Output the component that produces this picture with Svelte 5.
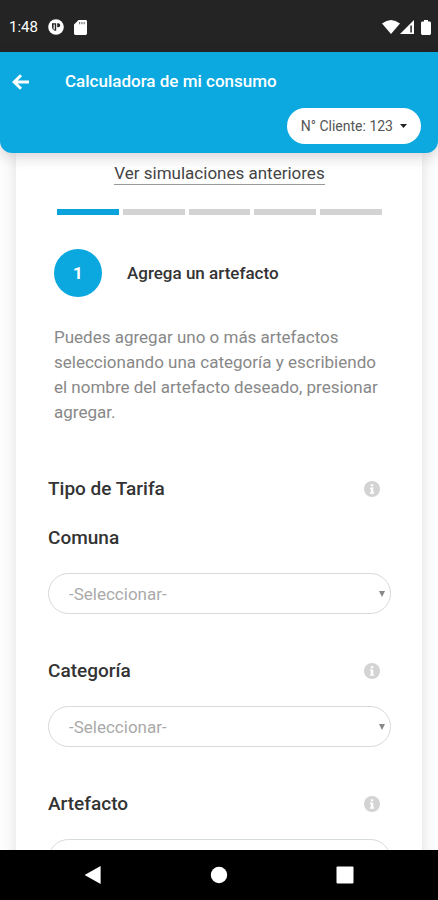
<script>
  let steps = [1, 2, 3, 4, 5]
  let currentStep = 1

  let fields = [
    { id: 'comuna', label: 'Comuna', info: false, value: '' },
    { id: 'categoria', label: 'Categoría', info: true, value: '' },
    { id: 'artefacto', label: 'Artefacto', info: true, value: '' }
  ]
</script>

{#snippet infoButton(label)}
  <button class="info" type="button" aria-label="Información: {label}">
    <svg viewBox="0 0 16 16" width="16" height="16">
      <circle cx="8" cy="8" r="8" fill="#d3d3d3" />
      <path d="M6.8 3.2h2.5v2.1H6.8zM6 6.6h3.3v4.6h.9v1.5H5.9v-1.5h.9V8.1H6z" fill="#fff" />
    </svg>
  </button>
{/snippet}

<div class="screen">
  <div class="status-bar">
    <div class="status-left">
      <span>1:48</span>
      <svg viewBox="0 0 16 16" width="16" height="16">
        <circle cx="8" cy="8" r="7.8" fill="#fff" />
        <path d="M4 4.2h4.2v7.6H6.6A4 4 0 0 1 4 8zM9.2 4.2h1a2 2 0 0 1 0 4h-1z" fill="#242424" />
        <path d="M5.6 5.4h1.2v5.2H5.6z" fill="#fff" />
      </svg>
      <svg viewBox="0 0 13 15" width="13" height="15">
        <path d="M4.6 0H11.6Q13 0 13 1.4V13.6Q13 15 11.6 15H1.4Q0 15 0 13.6V4.6z" fill="#fff" />
        <path d="M5 2h1.2v2.2H5zM7.3 2h1.2v2.2H7.3zM9.6 2h1.2v2.2H9.6z" fill="#777" />
      </svg>
    </div>
    <div class="status-right">
      <svg viewBox="0 0 18 14" width="18" height="14">
        <path d="M0 3.6Q9-3.4 18 3.6L9 14z" fill="#fff" />
      </svg>
      <svg viewBox="0 0 14 14" width="14" height="14">
        <path d="M14 0v14H0z" fill="#fff" />
        <path d="M10.2 5.5h1.8v7h-1.8z" fill="#4a4a4a" />
      </svg>
      <svg class="battery" viewBox="0 0 10 15" width="10" height="15">
        <path d="M3 0h4v1.6h1.6Q10 1.6 10 3v10.6Q10 15 8.6 15H1.4Q0 15 0 13.6V3Q0 1.6 1.4 1.6H3z" fill="#fff" />
      </svg>
    </div>
  </div>

  <header>
    <div class="title-row">
      <button class="back" type="button" aria-label="Volver">
        <svg viewBox="0 0 18 16" width="18" height="16">
          <path d="M9 1.2L2.2 8L9 14.8M2.5 8H17" fill="none" stroke="#fff" stroke-width="3" />
        </svg>
      </button>
      <h1>Calculadora de mi consumo</h1>
    </div>
    <button class="client" type="button">
      N° Cliente: 123
      <svg viewBox="0 0 7 4" width="7" height="4">
        <path d="M0 0h7L3.5 4z" fill="#222" />
      </svg>
    </button>
  </header>

  <main>
    <section class="card">
      <a class="history" href="#simulaciones">Ver simulaciones anteriores</a>

      <div class="steps">
        {#each steps as step}
          <span class="step" class:active={step === currentStep}></span>
        {/each}
      </div>

      <div class="step-title">
        <span class="number">{currentStep}</span>
        <h2>Agrega un artefacto</h2>
      </div>

      <p class="description">
        Puedes agregar uno o más artefactos seleccionando una categoría y escribiendo el nombre del
        artefacto deseado, presionar agregar.
      </p>

      <div class="label-row">
        <h3>Tipo de Tarifa</h3>
        {@render infoButton('Tipo de Tarifa')}
      </div>

      {#each fields as field (field.id)}
        <div class="field">
          <div class="label-row">
            <label for={field.id}>{field.label}</label>
            {#if field.info}
              {@render infoButton(field.label)}
            {/if}
          </div>
          <div class="select-box">
            <select id={field.id} bind:value={field.value}>
              <option value="">-Seleccionar-</option>
            </select>
            <svg class="arrow" viewBox="0 0 6 6" width="6" height="6">
              <path d="M0 0h6L3 6z" fill="#888" />
            </svg>
          </div>
        </div>
      {/each}
    </section>
  </main>

  <nav>
    <button type="button" aria-label="Atrás">
      <svg viewBox="0 0 18 18" width="18" height="18"><path d="M16.6 0v18L.6 9z" fill="#fff" /></svg>
    </button>
    <button type="button" aria-label="Inicio">
      <svg viewBox="0 0 18 18" width="18" height="18"><circle cx="9" cy="9" r="8.2" fill="#fff" /></svg>
    </button>
    <button type="button" aria-label="Recientes">
      <svg viewBox="0 0 18 18" width="18" height="18">
        <rect x="0.5" y="0.5" width="17" height="17" rx="1" fill="#fff" />
      </svg>
    </button>
  </nav>
</div>

<style>
  :global(body) {
    margin: 0;
  }

  .screen {
    display: flex;
    flex-direction: column;
    height: 100vh;
    background: #fdfdfd;
    color: #333;
    font-family: Roboto, 'Liberation Sans', sans-serif;
    font-size: 17px;
    overflow: hidden;
  }

  button {
    padding: 0;
    border: none;
    background: none;
    font-family: inherit;
    cursor: pointer;
  }

  svg {
    display: block;
  }

  h1,
  h2,
  h3,
  p {
    margin: 0;
  }

  .status-bar {
    display: flex;
    flex-shrink: 0;
    justify-content: space-between;
    align-items: center;
    height: 52px;
    padding: 2px 7px 0 9px;
    box-sizing: border-box;
    background: #242424;
    color: #fff;
    font-size: 15px;
  }

  .status-left {
    display: flex;
    align-items: center;
    gap: 10px;
  }

  .status-right {
    display: flex;
    align-items: center;
  }

  .battery {
    margin-left: 7px;
  }

  header {
    position: relative;
    z-index: 1;
    display: flex;
    flex-direction: column;
    flex-shrink: 0;
    gap: 13px;
    padding: 16px 17px 9px 12px;
    border-radius: 0 0 12px 12px;
    background: #0ba9e0;
    box-shadow: 0 4px 14px rgba(60, 30, 40, 0.2);
  }

  .title-row {
    display: flex;
    align-items: center;
    gap: 35px;
  }

  h1 {
    color: #fff;
    font-size: 17px;
    font-weight: 500;
    line-height: 27px;
  }

  .client {
    display: flex;
    align-items: center;
    align-self: flex-end;
    gap: 7px;
    height: 36px;
    padding: 0 14px;
    border-radius: 18px;
    background: #fff;
    color: #555;
    font-size: 14px;
  }

  main {
    flex: 1;
    min-height: 0;
    padding: 0 16px;
    overflow: hidden;
  }

  .card {
    display: flex;
    flex-direction: column;
    padding: 10px 31px 40px 32px;
    background: #fff;
    box-shadow: 0 0 14px rgba(0, 0, 0, 0.12);
  }

  .history {
    align-self: center;
    border-bottom: 1px solid #999;
    color: #444;
    line-height: 21px;
    text-decoration: none;
  }

  .steps {
    display: flex;
    gap: 4px;
    margin: 24px 9px 34px;
  }

  .step {
    flex: 1;
    height: 6px;
    background: #d3d3d3;
  }

  .step.active {
    background: #0ba3db;
  }

  .step-title {
    display: flex;
    align-items: center;
    gap: 25px;
    padding-left: 6px;
  }

  .number {
    display: flex;
    align-items: center;
    justify-content: center;
    width: 48px;
    height: 48px;
    border-radius: 50%;
    background: #0ba7df;
    color: #fff;
    font-weight: 700;
  }

  h2 {
    font-size: 17px;
    font-weight: 500;
  }

  .description {
    margin: 28px 6px 52px;
    color: #888;
    line-height: 25px;
  }

  .label-row {
    display: flex;
    justify-content: space-between;
    align-items: center;
    padding-right: 11px;
  }

  h3,
  label {
    font-size: 19px;
    font-weight: 500;
    line-height: 24px;
  }

  .field {
    margin-top: 25px;
  }

  .field + .field {
    margin-top: 45px;
  }

  .select-box {
    position: relative;
    margin-top: 23px;
  }

  select {
    display: block;
    width: 100%;
    height: 41px;
    padding: 0 20px;
    border: 1px solid #d5dada;
    border-radius: 21px;
    appearance: none;
    background: #fff;
    color: #aaa;
    font-family: inherit;
    font-size: 17px;
  }

  .arrow {
    position: absolute;
    top: 18px;
    right: 6px;
    pointer-events: none;
  }

  nav {
    display: flex;
    flex-shrink: 0;
    justify-content: center;
    align-items: center;
    gap: 108px;
    height: 50px;
    background: #000;
  }
</style>
